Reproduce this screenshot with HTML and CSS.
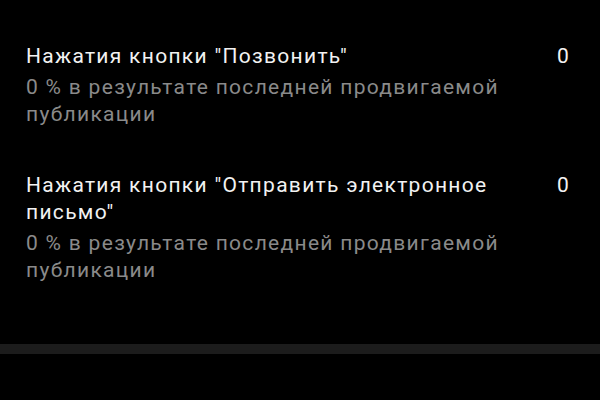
FILE: index.html
```html
<!DOCTYPE html>
<html lang="ru">
<head>
  <meta charset="UTF-8">
  <title>Статистика публикации</title>
  <meta name="viewport" content="width=device-width, initial-scale=1">
  <link rel="stylesheet" href="styles.css">
</head>
<body>

  <div class="metrics">
    <div class="metric">
      <div class="metric-text">
        <div class="metric-title">Нажатия кнопки "Позвонить"</div>
        <div class="metric-note">0 % в результате последней продвигаемой публикации</div>
      </div>
      <div class="metric-value">0</div>
    </div>

    <div class="metric">
      <div class="metric-text">
        <div class="metric-title">Нажатия кнопки "Отправить электронное письмо"</div>
        <div class="metric-note">0 % в результате последней продвигаемой публикации</div>
      </div>
      <div class="metric-value">0</div>
    </div>
  </div>

  <div class="divider"></div>

</body>
</html>
```

FILE: styles.css
```css
* { box-sizing: border-box; }

html, body {
  height: 100%;
}

body {
  margin: 0;
  background-color: #000;
  font-family: Roboto, "Noto Sans", sans-serif;
  font-size: 21px;
  line-height: 27px;
  letter-spacing: 1.3px;
}

.metrics {
  padding: 21px 30px 38px 26px;
}

.metric {
  display: flex;
  align-items: flex-start;
  gap: 20px;
  padding: 22px 0;
}

.metric-text {
  flex: 1;
  max-width: 490px;
}

.metric-title {
  color: #f2f2f2;
}

.metric-note {
  margin-top: 4px;
  color: #8a8a8a;
}

.metric-value {
  margin-left: auto;
  color: #f2f2f2;
}

.divider {
  height: 10px;
  background-color: #1c1c1c;
}
```
